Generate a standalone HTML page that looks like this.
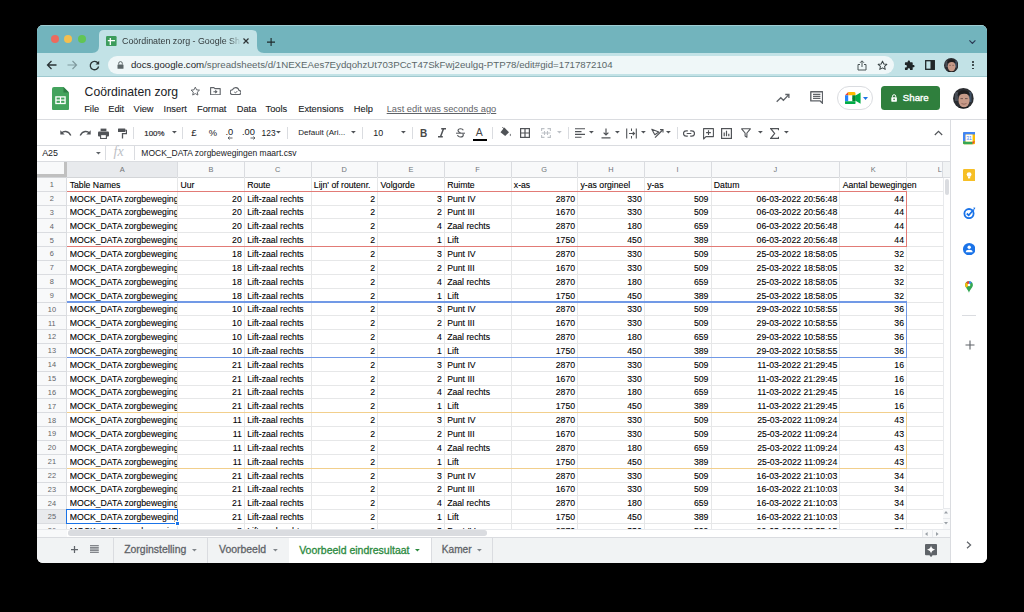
<!DOCTYPE html><html><head><meta charset="utf-8"><style>
*{margin:0;padding:0;box-sizing:border-box}
html,body{width:1024px;height:612px;overflow:hidden;background:#000;font-family:"Liberation Sans", sans-serif}
.a{position:absolute}
.t{position:absolute;white-space:nowrap;line-height:1}
.c{position:absolute;white-space:nowrap;line-height:1;font-size:8.7px;color:#000;-webkit-text-stroke:0.1px #000}
.r{text-align:right}
</style></head><body>
<div class="a" style="left:37px;top:25px;width:950px;height:538px;border-radius:6px;overflow:hidden;background:#fff">
<div class="a" style="left:-37px;top:-25px;width:1024px;height:612px">
<div class="a" style="left:37.00px;top:25.00px;width:950.00px;height:28.00px;background:#72b4bd"></div>
<div class="a" style="left:37.00px;top:25.00px;width:950.00px;height:0.80px;background:#9fcdd3"></div>
<div class="a" style="left:50.60px;top:34.80px;width:8.40px;height:8.40px;background:#ed6a5e;border-radius:50%"></div>
<div class="a" style="left:64.10px;top:34.80px;width:8.40px;height:8.40px;background:#f4bf4f;border-radius:50%"></div>
<div class="a" style="left:77.60px;top:34.80px;width:8.40px;height:8.40px;background:#61c554;border-radius:50%"></div>
<svg class="a" style="left:92px;top:29px" width="172" height="24" viewBox="0 0 172 24"><path d="M0 24 Q7 24 7 17 L7 6 Q7 1 12 1 L160 1 Q165 1 165 6 L165 17 Q165 24 172 24 Z" fill="#c2e2e6"/></svg>
<svg class="a" style="left:106.2px;top:36.3px" width="10.6" height="10.2" viewBox="0 0 10.6 10.2"><rect width="10.6" height="10.2" rx="1.2" fill="#3d9c5c"/><path d="M4.3 2V9M1.8 4.6H9" stroke="#fff" stroke-width="1.3"/></svg>
<div class="t" style="left:122px;top:36.9px;width:119px;overflow:hidden;font-size:8.9px;color:#333b3d;-webkit-mask-image:linear-gradient(90deg,#000 90%,transparent 100%)">Coördinaten zorg - Google Sheets</div>
<svg class="a" style="left:243.2px;top:38.4px" width="6" height="6" viewBox="0 0 6 6"><path d="M0.5 0.5L5.5 5.5M5.5 0.5L0.5 5.5" stroke="#2d3436" stroke-width="1.2"/></svg>
<svg class="a" style="left:266.9px;top:37.6px" width="8.2" height="8.2" viewBox="0 0 8.2 8.2"><path d="M4.1 0V8.2M0 4.1H8.2" stroke="#1f2a2c" stroke-width="1.15"/></svg>
<svg class="a" style="left:969.1px;top:39.9px" width="6.8" height="4.2" viewBox="0 0 6.8 4.2"><path d="M0.4 0.4L3.4 3.5L6.4 0.4" stroke="#2b3a55" stroke-width="1.1" fill="none"/></svg>
<div class="a" style="left:37.00px;top:52.80px;width:950.00px;height:23.60px;background:#c2e2e6"></div>
<div class="a" style="left:37.00px;top:76.00px;width:950.00px;height:0.60px;background:#9fc9cf"></div>
<svg class="a" style="left:46px;top:59.5px" width="11" height="10" viewBox="0 0 11 10"><path d="M10.5 5H1.5M5.5 1L1.5 5L5.5 9" stroke="#2a3436" stroke-width="1.3" fill="none"/></svg>
<svg class="a" style="left:67px;top:59.5px" width="11" height="10" viewBox="0 0 11 10"><path d="M0.5 5H9.5M5.5 1L9.5 5L5.5 9" stroke="#7f9a9e" stroke-width="1.2" fill="none"/></svg>
<svg class="a" style="left:88.5px;top:59.5px" width="11" height="11" viewBox="0 0 11 11"><path d="M9 3.2A4.2 4.2 0 1 0 9.6 6.5" stroke="#2a3436" stroke-width="1.3" fill="none"/><path d="M10.2 0.8V4.4H6.6Z" fill="#2a3436"/></svg>
<div class="a" style="left:107.90px;top:55.90px;width:786.10px;height:17.90px;background:#eff7f8;border-radius:9px"></div>
<svg class="a" style="left:116.5px;top:61px" width="7" height="8" viewBox="0 0 7 8"><path d="M1.7 3.5V2.4A1.8 1.8 0 0 1 5.3 2.4V3.5" stroke="#5c6668" stroke-width="1" fill="none"/><rect x="0.5" y="3.4" width="6" height="4.4" rx="0.6" fill="#5c6668"/></svg>
<div class="t" style="left:130.90px;top:60.00px;font-size:9.7px"><span style="color:#1f2628">docs.google.com</span><span style="color:#5b6769">/spreadsheets/d/1NEXEAes7EydqohzUt703PCcT47SkFwj2eulgq-PTP78/edit#gid=1717872104</span></div>
<svg class="a" style="left:857px;top:59.5px" width="10" height="11" viewBox="0 0 10 11"><path d="M3 4.5H1V10H9V4.5H7M5 7V1M3 2.8L5 0.8L7 2.8" stroke="#4a5456" stroke-width="1" fill="none"/></svg>
<svg class="a" style="left:877px;top:59.5px" width="11" height="11" viewBox="0 0 24 24"><path d="M12 2.5l2.9 6.2 6.6.7-5 4.5 1.4 6.6L12 17.2l-5.9 3.3 1.4-6.6-5-4.5 6.6-.7z" stroke="#3a4446" stroke-width="2.2" fill="none" stroke-linejoin="round"/></svg>
<svg class="a" style="left:903.5px;top:59.5px" width="11" height="11" viewBox="0 0 24 24"><path d="M20.5 11H19V7c0-1.1-.9-2-2-2h-4V3.5C13 2.1 11.9 1 10.5 1S8 2.1 8 3.5V5H4c-1.1 0-2 .9-2 2v3.8h1.5c1.5 0 2.7 1.2 2.7 2.7S5 16.2 3.5 16.2H2V20c0 1.1.9 2 2 2h3.8v-1.5c0-1.5 1.2-2.7 2.7-2.7s2.7 1.2 2.7 2.7V22H17c1.1 0 2-.9 2-2v-4h1.5c1.4 0 2.5-1.1 2.5-2.5S21.9 11 20.5 11z" fill="#1f2628"/></svg>
<svg class="a" style="left:925px;top:60px" width="10" height="10" viewBox="0 0 10 10"><rect x="0.7" y="0.7" width="8.6" height="8.6" fill="none" stroke="#1f2628" stroke-width="1.3"/><rect x="5.5" y="0.7" width="3.8" height="8.6" fill="#1f2628"/></svg>
<svg class="a" style="left:944.10px;top:57.90px" width="14.4" height="14.4" viewBox="0 0 20.8 20.8"><defs><clipPath id="av2"><circle cx="10.4" cy="10.4" r="10.4"/></clipPath></defs><g clip-path="url(#av2)"><rect width="20.8" height="20.8" fill="#2b2d31"/><rect x="2" y="4" width="3" height="9" fill="#5b636e" opacity=".6"/><rect x="15.5" y="4" width="3" height="10" fill="#4f6a8a" opacity=".6"/><ellipse cx="11" cy="12" rx="5.6" ry="7.4" fill="#c79a88"/><path d="M4.5 8Q5 2 11 2.2Q17 2.4 17 8.5L15.8 7Q12 4.5 6.5 6.8Z" fill="#1f1d1e"/><path d="M7.5 10.6H10M12 10.6H14.6" stroke="#5a4440" stroke-width=".8"/><path d="M3 20.8Q6 17.5 11 19.5Q16 17.5 19 20.8Z" fill="#1a1a1c"/></g></svg>
<div class="a" style="left:971.80px;top:60.90px;width:1.80px;height:1.80px;background:#1f2628;border-radius:50%"></div>
<div class="a" style="left:971.80px;top:64.20px;width:1.80px;height:1.80px;background:#1f2628;border-radius:50%"></div>
<div class="a" style="left:971.80px;top:67.50px;width:1.80px;height:1.80px;background:#1f2628;border-radius:50%"></div>
<svg class="a" style="left:52px;top:86.7px" width="17" height="23.4" viewBox="0 0 17 23.4"><path d="M2 0H11.5L17 5.5V21.4Q17 23.4 15 23.4H2Q0 23.4 0 21.4V2Q0 0 2 0Z" fill="#43a35d"/><path d="M11.5 0V5.5H17Z" fill="#2e7d45"/><rect x="3.9" y="9.9" width="9.2" height="6.6" fill="none" stroke="#fff" stroke-width="1.3"/><line x1="8.5" y1="9.9" x2="8.5" y2="16.5" stroke="#fff" stroke-width="1.2"/><line x1="3.9" y1="13.2" x2="13.1" y2="13.2" stroke="#fff" stroke-width="1.2"/></svg>
<div class="t" style="left:84.60px;top:85.80px;font-size:12.2px;color:#202124">Coördinaten zorg</div>
<svg class="a" style="left:190.3px;top:85.6px" width="10.6" height="10.6" viewBox="0 0 24 24"><path d="M12 2.5l2.9 6.2 6.6.7-5 4.5 1.4 6.6L12 17.2l-5.9 3.3 1.4-6.6-5-4.5 6.6-.7z" stroke="#5f6368" stroke-width="2.2" fill="none" stroke-linejoin="round"/></svg>
<svg class="a" style="left:209.8px;top:86.6px" width="10.8" height="8.4" viewBox="0 0 10.8 8.4"><path d="M0.6 0.6H3.9L4.9 1.6H10.2V7.8H0.6Z" stroke="#5f6368" stroke-width="1.1" fill="none" stroke-linejoin="round"/><path d="M3.4 4.7H6.6M5.3 3.3L6.8 4.7L5.3 6.1" stroke="#5f6368" stroke-width="1.1" fill="none"/></svg>
<svg class="a" style="left:229.8px;top:87px" width="11.4" height="8.2" viewBox="0 0 11.4 8.2"><path d="M2.7 7.6H8.8A2.1 2.1 0 0 0 9 3.4A3.4 3.4 0 0 0 2.5 2.8A2.4 2.4 0 0 0 2.7 7.6Z" stroke="#5f6368" stroke-width="1.1" fill="none"/><path d="M4.3 5L5.4 6L7.3 4.1" stroke="#5f6368" stroke-width="1" fill="none"/></svg>
<div class="t" style="left:84.20px;top:104.90px;font-size:9.3px;color:#202124;-webkit-text-stroke:0.1px #202124">File</div>
<div class="t" style="left:108.20px;top:104.90px;font-size:9.3px;color:#202124;-webkit-text-stroke:0.1px #202124">Edit</div>
<div class="t" style="left:133.60px;top:104.90px;font-size:9.3px;color:#202124;-webkit-text-stroke:0.1px #202124">View</div>
<div class="t" style="left:163.60px;top:104.90px;font-size:9.3px;color:#202124;-webkit-text-stroke:0.1px #202124">Insert</div>
<div class="t" style="left:197.00px;top:104.90px;font-size:9.3px;color:#202124;-webkit-text-stroke:0.1px #202124">Format</div>
<div class="t" style="left:236.70px;top:104.90px;font-size:9.3px;color:#202124;-webkit-text-stroke:0.1px #202124">Data</div>
<div class="t" style="left:265.50px;top:104.90px;font-size:9.3px;color:#202124;-webkit-text-stroke:0.1px #202124">Tools</div>
<div class="t" style="left:298.20px;top:104.90px;font-size:9.3px;color:#202124;-webkit-text-stroke:0.1px #202124">Extensions</div>
<div class="t" style="left:353.80px;top:104.90px;font-size:9.3px;color:#202124;-webkit-text-stroke:0.1px #202124">Help</div>
<div class="t" style="left:386.70px;top:104.90px;font-size:9.3px;color:#5f6368;text-decoration:underline">Last edit was seconds ago</div>
<svg class="a" style="left:775.5px;top:93px" width="14" height="10" viewBox="0 0 14 10"><path d="M0.7 8.8L4.8 4.7L7.4 7.3L12.4 2.1M9.3 1.5H12.9V5.1" stroke="#5f6368" stroke-width="1.3" fill="none"/></svg>
<svg class="a" style="left:809.60px;top:91.20px" width="13.4" height="13" viewBox="0 0 13.4 13"><path d="M0.8 0.8H12.6V12.3L10.2 9.9H0.8Z" stroke="#5f6368" stroke-width="1.4" fill="none" stroke-linejoin="round"/><path d="M3 3.4H10.4M3 5.4H10.4M3 7.4H10.4" stroke="#5f6368" stroke-width="1.1"/></svg>
<div class="a" style="left:837.40px;top:86.10px;width:35.60px;height:23.80px;border:1px solid #dadce0;border-radius:12px;background:#fff"></div>
<svg class="a" style="left:844.60px;top:92.00px" width="16.2" height="12.4" viewBox="0 0 16.2 12.4"><path d="M3.2 0H9Q10.5 0 10.5 1.5V3.2H3.2Z" fill="#ffba00"/><path d="M0 3.2L3.2 0V3.2Z" fill="#ea4335"/><path d="M0 3.2H3.2V9.2H0Z" fill="#2684fc"/><path d="M0 9.2H10.5V10.9Q10.5 12.4 9 12.4H1.5Q0 12.4 0 10.9Z" fill="#00ac47"/><path d="M7.3 3.2H10.5V9.2H7.3Z" fill="#00832d"/><path d="M10.5 3.6L15.6 0.6V11.8L10.5 8.8Z" fill="#00ac47"/><path d="M7.3 6.2L10.5 3.6V8.8Z" fill="#00832d"/></svg>
<svg class="a" style="left:862.5px;top:97px" width="5" height="3" viewBox="0 0 5 3"><path d="M0 0H5L2.5 3Z" fill="#1a73e8"/></svg>
<div class="a" style="left:880.90px;top:86.10px;width:58.80px;height:24.00px;background:#2f7f3d;border-radius:3.5px"></div>
<svg class="a" style="left:890.6px;top:94px" width="6.2" height="7.8" viewBox="0 0 6.2 7.8"><path d="M1.5 3.3V2.3A1.6 1.6 0 0 1 4.7 2.3V3.3" stroke="#fff" stroke-width="1" fill="none"/><rect x="0.3" y="3.2" width="5.6" height="4.5" rx="0.6" fill="#fff"/><circle cx="3.1" cy="5.4" r="0.8" fill="#2f7f3d"/></svg>
<div class="t" style="left:902.80px;top:92.50px;font-size:9.7px;color:#fff;-webkit-text-stroke:0.35px #fff">Share</div>
<svg class="a" style="left:952.90px;top:88.00px" width="20.8" height="20.8" viewBox="0 0 20.8 20.8"><defs><clipPath id="av1"><circle cx="10.4" cy="10.4" r="10.4"/></clipPath></defs><g clip-path="url(#av1)"><rect width="20.8" height="20.8" fill="#2b2d31"/><rect x="2" y="4" width="3" height="9" fill="#5b636e" opacity=".6"/><rect x="15.5" y="4" width="3" height="10" fill="#4f6a8a" opacity=".6"/><ellipse cx="11" cy="12" rx="5.6" ry="7.4" fill="#c79a88"/><path d="M4.5 8Q5 2 11 2.2Q17 2.4 17 8.5L15.8 7Q12 4.5 6.5 6.8Z" fill="#1f1d1e"/><path d="M7.5 10.6H10M12 10.6H14.6" stroke="#5a4440" stroke-width=".8"/><path d="M8.5 15.5Q11 17 13.5 15.5" stroke="#8a5d55" stroke-width=".8" fill="none"/><path d="M3 20.8Q6 17.5 11 19.5Q16 17.5 19 20.8Z" fill="#1a1a1c"/></g></svg>
<div class="a" style="left:37.00px;top:119.20px;width:950.00px;height:0.80px;background:#dadce0"></div>
<div class="a" style="left:37.00px;top:145.00px;width:913.50px;height:0.80px;background:#dadce0"></div>
<svg class="a" style="left:60.00px;top:128.50px" width="12" height="8" viewBox="0 0 12 8"><path d="M1.5 4.2C3.5 1.8 8.2 1.3 10.8 6.5" stroke="#505357" stroke-width="1.4" fill="none"/><path d="M0.3 1.2V5.6H4.7Z" fill="#505357"/></svg>
<svg class="a" style="left:79.00px;top:128.50px" width="12" height="8" viewBox="0 0 12 8"><path d="M10.5 4.2C8.5 1.8 3.8 1.3 1.2 6.5" stroke="#505357" stroke-width="1.4" fill="none"/><path d="M11.7 1.2V5.6H7.3Z" fill="#505357"/></svg>
<svg class="a" style="left:97.50px;top:127.50px" width="11" height="11" viewBox="0 0 11 11"><rect x="2.6" y="0.6" width="5.8" height="2.6" fill="#505357"/><rect x="0" y="3.4" width="11" height="5" rx="1" fill="#505357"/><rect x="2.6" y="6.6" width="5.8" height="3.9" fill="#fff" stroke="#505357" stroke-width="1.1"/></svg>
<svg class="a" style="left:117.50px;top:127.50px" width="9" height="11" viewBox="0 0 9 11"><rect x="0" y="0.5" width="7.4" height="3.6" rx="0.5" fill="#505357"/><path d="M7.4 2.3H8.5V5.6H4.5V10.5" stroke="#505357" stroke-width="1.3" fill="none"/></svg>
<div class="a" style="left:132.90px;top:126.70px;width:0.80px;height:12.10px;background:#dadce0"></div>
<div class="t" style="left:144.30px;top:129.50px;font-size:7.9px;color:#202124;-webkit-text-stroke:0.15px #202124">100%</div>
<svg class="a" style="left:171.60px;top:131.40px" width="5" height="3" viewBox="0 0 5 3"><path d="M0 0H4.8L2.4 2.6Z" fill="#505357"/></svg>
<div class="a" style="left:182.00px;top:126.70px;width:0.80px;height:12.10px;background:#dadce0"></div>
<div class="t" style="left:191.30px;top:128.10px;font-size:9.8px;color:#202124">£</div>
<div class="t" style="left:208.80px;top:128.10px;font-size:9.4px;color:#202124">%</div>
<div class="t" style="left:225.50px;top:128.40px;font-size:9.3px;color:#202124">.0</div>
<svg class="a" style="left:226.80px;top:136.00px" width="6" height="4" viewBox="0 0 6 4"><path d="M5.5 2H1.2M2.6 0.6L1 2L2.6 3.4" stroke="#505357" stroke-width="0.9" fill="none"/></svg>
<div class="t" style="left:242.00px;top:128.40px;font-size:9.3px;color:#202124">.00</div>
<svg class="a" style="left:249.50px;top:136.00px" width="6" height="4" viewBox="0 0 6 4"><path d="M0.5 2H4.8M3.4 0.6L5 2L3.4 3.4" stroke="#505357" stroke-width="0.9" fill="none"/></svg>
<div class="t" style="left:261.60px;top:129.10px;font-size:8.4px;color:#202124">123</div>
<svg class="a" style="left:276.00px;top:131.40px" width="5" height="3" viewBox="0 0 5 3"><path d="M0 0H4.8L2.4 2.6Z" fill="#505357"/></svg>
<div class="a" style="left:286.90px;top:126.70px;width:0.80px;height:12.10px;background:#dadce0"></div>
<div class="t" style="left:298.30px;top:129.20px;font-size:8.05px;color:#202124">Default (Ari...</div>
<svg class="a" style="left:351.00px;top:131.40px" width="5" height="3" viewBox="0 0 5 3"><path d="M0 0H4.8L2.4 2.6Z" fill="#505357"/></svg>
<div class="a" style="left:361.90px;top:126.70px;width:0.80px;height:12.10px;background:#dadce0"></div>
<div class="t" style="left:373.30px;top:129.00px;font-size:8.9px;color:#202124">10</div>
<svg class="a" style="left:401.40px;top:131.40px" width="5" height="3" viewBox="0 0 5 3"><path d="M0 0H4.8L2.4 2.6Z" fill="#505357"/></svg>
<div class="a" style="left:411.60px;top:126.70px;width:0.80px;height:12.10px;background:#dadce0"></div>
<div class="t" style="left:419.90px;top:128.80px;font-size:10px;color:#474747;font-weight:bold">B</div>
<svg class="a" style="left:437.30px;top:128.00px" width="10" height="9.5" viewBox="0 0 10 9.5"><path d="M4.2 0.8H9M1 8.7H5.8M6.5 0.8L3.5 8.7" stroke="#505357" stroke-width="1.5" fill="none"/></svg>
<svg class="a" style="left:455.80px;top:127.80px" width="9" height="10" viewBox="0 0 9 10"><path d="M7.3 2.2C6.9 1.2 6 0.8 4.6 0.8C3 0.8 2 1.6 2 2.8C2 4 3 4.4 4.5 4.8M1.6 7C1.8 8.4 3 9 4.5 9C6.3 9 7.3 8.3 7.3 7C7.3 6.3 7 5.9 6.6 5.6" stroke="#505357" stroke-width="1.1" fill="none"/><path d="M0 5.2H9" stroke="#505357" stroke-width="1"/></svg>
<div class="t" style="left:475.80px;top:126.80px;font-size:10.5px;color:#474747">A</div>
<div class="a" style="left:472.80px;top:138.70px;width:14.10px;height:1.90px;background:#000"></div>
<div class="a" style="left:492.10px;top:126.70px;width:0.80px;height:12.10px;background:#dadce0"></div>
<svg class="a" style="left:500.00px;top:127.30px" width="12" height="11" viewBox="0 0 12 11"><path d="M4.3 0.6L9 5.3L5.2 9.1L0.5 5.3Z" fill="#505357"/><path d="M10.3 6.5Q11.5 8.2 10.3 9.2Q9.1 8.2 10.3 6.5Z" fill="#505357"/><path d="M2.4 0.1L5.2 2.9" stroke="#505357" stroke-width="1"/></svg>
<svg class="a" style="left:520.30px;top:128.00px" width="10" height="10" viewBox="0 0 10 10"><rect x="0.6" y="0.6" width="8.8" height="8.8" fill="none" stroke="#505357" stroke-width="1.2"/><path d="M5 0.6V9.4M0.6 5H9.4" stroke="#505357" stroke-width="1.2"/></svg>
<svg class="a" style="left:540.50px;top:128.00px" width="10" height="10" viewBox="0 0 10 10"><path d="M0.6 3V0.6H3.5M6.5 0.6H9.4V3M9.4 7V9.4H6.5M3.5 9.4H0.6V7M0.6 5H9.4M3.5 3V7M6.5 3V7" stroke="#bdc1c6" stroke-width="1.1" fill="none"/></svg>
<svg class="a" style="left:556.90px;top:131.40px" width="5" height="3" viewBox="0 0 5 3"><path d="M0 0H4.8L2.4 2.6Z" fill="#bdc1c6"/></svg>
<div class="a" style="left:568.30px;top:126.70px;width:0.80px;height:12.10px;background:#dadce0"></div>
<svg class="a" style="left:575.00px;top:128.00px" width="10" height="10" viewBox="0 0 10 10"><path d="M0 0.8H10M0 3.6H6.5M0 6.4H10M0 9.2H6.5" stroke="#505357" stroke-width="1.1"/></svg>
<svg class="a" style="left:589.20px;top:131.40px" width="5" height="3" viewBox="0 0 5 3"><path d="M0 0H4.8L2.4 2.6Z" fill="#505357"/></svg>
<svg class="a" style="left:601.00px;top:127.50px" width="10" height="11" viewBox="0 0 10 11"><path d="M5 0.5V7M2.6 4.6L5 7L7.4 4.6M0.5 9.8H9.5" stroke="#505357" stroke-width="1.2" fill="none"/></svg>
<svg class="a" style="left:615.00px;top:131.40px" width="5" height="3" viewBox="0 0 5 3"><path d="M0 0H4.8L2.4 2.6Z" fill="#505357"/></svg>
<svg class="a" style="left:626.00px;top:127.50px" width="11" height="11" viewBox="0 0 11 11"><path d="M0.7 0.5V10.5M10.3 0.5V10.5M3 5.5H8.5M6.8 3.8L8.5 5.5L6.8 7.2" stroke="#505357" stroke-width="1.1" fill="none"/><path d="M5.5 0.5V3M5.5 8V10.5" stroke="#505357" stroke-width="1"/></svg>
<svg class="a" style="left:640.80px;top:131.40px" width="5" height="3" viewBox="0 0 5 3"><path d="M0 0H4.8L2.4 2.6Z" fill="#505357"/></svg>
<svg class="a" style="left:651.00px;top:127.50px" width="13" height="11" viewBox="0 0 13 11"><path d="M0.8 1.2L7.8 4L3.8 6.7Z" stroke="#505357" stroke-width="1.1" fill="none" stroke-linejoin="round"/><path d="M4 9.6L11.6 2" stroke="#505357" stroke-width="1.2"/><path d="M9 1.6H12V4.6" stroke="#505357" stroke-width="1.1" fill="none"/></svg>
<svg class="a" style="left:666.20px;top:131.40px" width="5" height="3" viewBox="0 0 5 3"><path d="M0 0H4.8L2.4 2.6Z" fill="#505357"/></svg>
<div class="a" style="left:677.10px;top:126.70px;width:0.80px;height:12.10px;background:#dadce0"></div>
<svg class="a" style="left:683.20px;top:129.80px" width="12" height="7" viewBox="0 0 12 7"><path d="M4.8 0.8H3.2A2.7 2.7 0 0 0 3.2 6.2H4.8M7.2 0.8H8.8A2.7 2.7 0 0 1 8.8 6.2H7.2M3.7 3.5H8.3" stroke="#505357" stroke-width="1.2" fill="none"/></svg>
<svg class="a" style="left:702.50px;top:127.50px" width="11" height="12" viewBox="0 0 11 12"><path d="M0.6 0.6H10.4V8.6H3L0.6 11Z" stroke="#505357" stroke-width="1.1" fill="none" stroke-linejoin="round"/><path d="M5.5 2.2V7M3.1 4.6H7.9" stroke="#505357" stroke-width="1.1"/></svg>
<svg class="a" style="left:721.20px;top:127.80px" width="11" height="11" viewBox="0 0 11 11"><rect x="0.6" y="0.6" width="9.8" height="9.8" fill="none" stroke="#505357" stroke-width="1.2"/><path d="M3.2 4.5V8.2M5.5 2.8V8.2M7.8 5.8V8.2" stroke="#505357" stroke-width="1.2"/></svg>
<svg class="a" style="left:741.00px;top:128.00px" width="10" height="10" viewBox="0 0 10 10"><path d="M0.6 0.8H9.4L5.9 5V9.2L4.1 8.1V5Z" stroke="#505357" stroke-width="1.1" fill="none" stroke-linejoin="round"/></svg>
<svg class="a" style="left:757.60px;top:131.40px" width="5" height="3" viewBox="0 0 5 3"><path d="M0 0H4.8L2.4 2.6Z" fill="#505357"/></svg>
<svg class="a" style="left:770.20px;top:127.50px" width="9" height="11" viewBox="0 0 9 11"><path d="M8.5 2.2V0.7H0.8L4.6 5.5L0.8 10.3H8.5V8.8" stroke="#505357" stroke-width="1.2" fill="none"/></svg>
<svg class="a" style="left:784.10px;top:131.40px" width="5" height="3" viewBox="0 0 5 3"><path d="M0 0H4.8L2.4 2.6Z" fill="#505357"/></svg>
<svg class="a" style="left:933.80px;top:129.60px" width="9" height="6" viewBox="0 0 9 6"><path d="M0.8 5L4.5 1.3L8.2 5" stroke="#505357" stroke-width="1.15" fill="none"/></svg>
<div class="a" style="left:37.00px;top:160.60px;width:913.50px;height:0.80px;background:#dadce0"></div>
<div class="t" style="left:42.20px;top:148.80px;font-size:8.9px;color:#202124">A25</div>
<svg class="a" style="left:95.60px;top:152.40px" width="5" height="3" viewBox="0 0 5 3"><path d="M0 0H4.8L2.4 2.6Z" fill="#5f6368"/></svg>
<div class="a" style="left:105.20px;top:146.30px;width:0.80px;height:13.70px;background:#dadce0"></div>
<div class="t" style="left:113.50px;top:145.40px;font-size:14px;color:#bdc1c6;font-style:italic;font-family:&quot;Liberation Serif&quot;,serif">fx</div>
<div class="a" style="left:133.90px;top:146.30px;width:0.80px;height:13.70px;background:#dadce0"></div>
<div class="t" style="left:141.30px;top:149.10px;font-size:8.5px;color:#202124">MOCK_DATA zorgbewegingen maart.csv</div>
<div class="a" style="left:950.10px;top:120.00px;width:36.90px;height:443.00px;background:#fff"></div>
<div class="a" style="left:950.10px;top:119.20px;width:0.80px;height:443.80px;background:#dadce0"></div>
<svg class="a" style="left:962.80px;top:132.40px" width="12.2" height="12.2" viewBox="0 0 12.2 12.2"><rect x="0" y="0" width="12.2" height="12.2" rx="1.2" fill="#fbbc04"/><path d="M0 1.2Q0 0 1.2 0H12.2V2.6H2.6V9.6H0Z" fill="#4285f4"/><path d="M0 9.6H9.6V12.2H1.2Q0 12.2 0 11Z" fill="#34a853"/><path d="M9.6 9.6H12.2L9.6 12.2Z" fill="#ea4335"/><rect x="2.6" y="2.6" width="7" height="7" fill="#fff"/><text x="6.1" y="8.3" font-size="5.2" text-anchor="middle" fill="#4285f4" font-family="Liberation Sans">31</text></svg>
<svg class="a" style="left:962.80px;top:169.00px" width="12.2" height="12.4" viewBox="0 0 12.2 12.4"><rect x="0" y="0" width="12.2" height="12.4" rx="1.3" fill="#f6bf26"/><circle cx="6.1" cy="5.6" r="2.4" fill="#fff"/><rect x="5" y="8" width="2.2" height="1.4" fill="#fff"/></svg>
<svg class="a" style="left:963.20px;top:206.50px" width="12.5" height="12.5" viewBox="0 0 12.5 12.5"><circle cx="6" cy="6.6" r="4.6" fill="none" stroke="#1a73e8" stroke-width="1.8"/><path d="M3.8 6.5L5.7 8.3L10.8 2.5" stroke="#1a73e8" stroke-width="1.8" fill="none"/><path d="M10 0.8L12.2 0.5L11.9 2.8Z" fill="#1a73e8"/></svg>
<svg class="a" style="left:963.00px;top:243.00px" width="12.4" height="12.4" viewBox="0 0 12.4 12.4"><circle cx="6.2" cy="6.2" r="6.2" fill="#1a73e8"/><circle cx="6.2" cy="4.3" r="1.7" fill="#fff"/><path d="M2.8 8.9Q2.8 6.8 6.2 6.8Q9.6 6.8 9.6 8.9V9.3H2.8Z" fill="#fff"/></svg>
<svg class="a" style="left:965.00px;top:280.50px" width="8" height="12" viewBox="0 0 8 12"><path d="M4 0.2A3.9 3.9 0 0 1 7.9 4.1C7.9 6.6 5 8.6 4 11.8C3 8.6 0.1 6.6 0.1 4.1A3.9 3.9 0 0 1 4 0.2Z" fill="#34a853"/><path d="M0.1 4.1A3.9 3.9 0 0 1 1.2 1.3L4 4.1L1.5 6.8C0.7 6 0.1 5.1 0.1 4.1Z" fill="#fbbc04"/><path d="M1.2 1.3A3.9 3.9 0 0 1 4 0.2L4 4.1Z" fill="#ea4335"/><path d="M4 0.2A3.9 3.9 0 0 1 6.8 1.3L4 4.1Z" fill="#4285f4"/><circle cx="4" cy="4" r="1.3" fill="#fff"/></svg>
<div class="a" style="left:962.00px;top:315.40px;width:14.00px;height:0.80px;background:#dadce0"></div>
<svg class="a" style="left:964.50px;top:340.30px" width="10" height="10" viewBox="0 0 10 10"><path d="M5 0.5V9.5M0.5 5H9.5" stroke="#5f6368" stroke-width="1.1"/></svg>
<svg class="a" style="left:965.50px;top:540.50px" width="6" height="8" viewBox="0 0 6 8"><path d="M1 0.8L4.6 4L1 7.2" stroke="#5f6368" stroke-width="1.2" fill="none"/></svg>
<div class="a" style="left:37.00px;top:161.40px;width:913.10px;height:375.60px;background:#fff"></div>
<div class="a" style="left:37px;top:161.4px;width:905.5px;height:368.00px;overflow:hidden">
<div class="a" style="left:-37px;top:-161.4px;width:1024px;height:612px">
<div class="a" style="left:37.00px;top:161.40px;width:913.00px;height:16.05px;background:#f8f9fa"></div>
<div class="a" style="left:66.80px;top:161.40px;width:110.80px;height:16.05px;background:#e8eaed"></div>
<div class="a" style="left:37.00px;top:177.45px;width:29.80px;height:351.95px;background:#f8f9fa"></div>
<div class="a" style="left:37.00px;top:509.75px;width:29.80px;height:13.85px;background:#e8eaed"></div>
<div class="a" style="left:37.00px;top:176.95px;width:29.80px;height:0.80px;background:#dadce0"></div>
<div class="a" style="left:66.80px;top:176.95px;width:913.00px;height:0.80px;background:#e6e7e8"></div>
<div class="a" style="left:37.00px;top:190.80px;width:29.80px;height:0.80px;background:#dadce0"></div>
<div class="a" style="left:66.80px;top:190.80px;width:913.00px;height:0.80px;background:#e6e7e8"></div>
<div class="a" style="left:37.00px;top:204.64px;width:29.80px;height:0.80px;background:#dadce0"></div>
<div class="a" style="left:66.80px;top:204.64px;width:913.00px;height:0.80px;background:#e6e7e8"></div>
<div class="a" style="left:37.00px;top:218.49px;width:29.80px;height:0.80px;background:#dadce0"></div>
<div class="a" style="left:66.80px;top:218.49px;width:913.00px;height:0.80px;background:#e6e7e8"></div>
<div class="a" style="left:37.00px;top:232.33px;width:29.80px;height:0.80px;background:#dadce0"></div>
<div class="a" style="left:66.80px;top:232.33px;width:913.00px;height:0.80px;background:#e6e7e8"></div>
<div class="a" style="left:37.00px;top:246.18px;width:29.80px;height:0.80px;background:#dadce0"></div>
<div class="a" style="left:66.80px;top:246.18px;width:913.00px;height:0.80px;background:#e6e7e8"></div>
<div class="a" style="left:37.00px;top:260.03px;width:29.80px;height:0.80px;background:#dadce0"></div>
<div class="a" style="left:66.80px;top:260.03px;width:913.00px;height:0.80px;background:#e6e7e8"></div>
<div class="a" style="left:37.00px;top:273.87px;width:29.80px;height:0.80px;background:#dadce0"></div>
<div class="a" style="left:66.80px;top:273.87px;width:913.00px;height:0.80px;background:#e6e7e8"></div>
<div class="a" style="left:37.00px;top:287.72px;width:29.80px;height:0.80px;background:#dadce0"></div>
<div class="a" style="left:66.80px;top:287.72px;width:913.00px;height:0.80px;background:#e6e7e8"></div>
<div class="a" style="left:37.00px;top:301.56px;width:29.80px;height:0.80px;background:#dadce0"></div>
<div class="a" style="left:66.80px;top:301.56px;width:913.00px;height:0.80px;background:#e6e7e8"></div>
<div class="a" style="left:37.00px;top:315.41px;width:29.80px;height:0.80px;background:#dadce0"></div>
<div class="a" style="left:66.80px;top:315.41px;width:913.00px;height:0.80px;background:#e6e7e8"></div>
<div class="a" style="left:37.00px;top:329.26px;width:29.80px;height:0.80px;background:#dadce0"></div>
<div class="a" style="left:66.80px;top:329.26px;width:913.00px;height:0.80px;background:#e6e7e8"></div>
<div class="a" style="left:37.00px;top:343.10px;width:29.80px;height:0.80px;background:#dadce0"></div>
<div class="a" style="left:66.80px;top:343.10px;width:913.00px;height:0.80px;background:#e6e7e8"></div>
<div class="a" style="left:37.00px;top:356.95px;width:29.80px;height:0.80px;background:#dadce0"></div>
<div class="a" style="left:66.80px;top:356.95px;width:913.00px;height:0.80px;background:#e6e7e8"></div>
<div class="a" style="left:37.00px;top:370.79px;width:29.80px;height:0.80px;background:#dadce0"></div>
<div class="a" style="left:66.80px;top:370.79px;width:913.00px;height:0.80px;background:#e6e7e8"></div>
<div class="a" style="left:37.00px;top:384.64px;width:29.80px;height:0.80px;background:#dadce0"></div>
<div class="a" style="left:66.80px;top:384.64px;width:913.00px;height:0.80px;background:#e6e7e8"></div>
<div class="a" style="left:37.00px;top:398.49px;width:29.80px;height:0.80px;background:#dadce0"></div>
<div class="a" style="left:66.80px;top:398.49px;width:913.00px;height:0.80px;background:#e6e7e8"></div>
<div class="a" style="left:37.00px;top:412.33px;width:29.80px;height:0.80px;background:#dadce0"></div>
<div class="a" style="left:66.80px;top:412.33px;width:913.00px;height:0.80px;background:#e6e7e8"></div>
<div class="a" style="left:37.00px;top:426.18px;width:29.80px;height:0.80px;background:#dadce0"></div>
<div class="a" style="left:66.80px;top:426.18px;width:913.00px;height:0.80px;background:#e6e7e8"></div>
<div class="a" style="left:37.00px;top:440.02px;width:29.80px;height:0.80px;background:#dadce0"></div>
<div class="a" style="left:66.80px;top:440.02px;width:913.00px;height:0.80px;background:#e6e7e8"></div>
<div class="a" style="left:37.00px;top:453.87px;width:29.80px;height:0.80px;background:#dadce0"></div>
<div class="a" style="left:66.80px;top:453.87px;width:913.00px;height:0.80px;background:#e6e7e8"></div>
<div class="a" style="left:37.00px;top:467.72px;width:29.80px;height:0.80px;background:#dadce0"></div>
<div class="a" style="left:66.80px;top:467.72px;width:913.00px;height:0.80px;background:#e6e7e8"></div>
<div class="a" style="left:37.00px;top:481.56px;width:29.80px;height:0.80px;background:#dadce0"></div>
<div class="a" style="left:66.80px;top:481.56px;width:913.00px;height:0.80px;background:#e6e7e8"></div>
<div class="a" style="left:37.00px;top:495.41px;width:29.80px;height:0.80px;background:#dadce0"></div>
<div class="a" style="left:66.80px;top:495.41px;width:913.00px;height:0.80px;background:#e6e7e8"></div>
<div class="a" style="left:37.00px;top:509.25px;width:29.80px;height:0.80px;background:#dadce0"></div>
<div class="a" style="left:66.80px;top:509.25px;width:913.00px;height:0.80px;background:#e6e7e8"></div>
<div class="a" style="left:37.00px;top:523.10px;width:29.80px;height:0.80px;background:#dadce0"></div>
<div class="a" style="left:66.80px;top:523.10px;width:913.00px;height:0.80px;background:#e6e7e8"></div>
<div class="a" style="left:37.00px;top:536.95px;width:29.80px;height:0.80px;background:#dadce0"></div>
<div class="a" style="left:66.80px;top:536.95px;width:913.00px;height:0.80px;background:#e6e7e8"></div>
<div class="a" style="left:37.00px;top:176.65px;width:913.00px;height:0.80px;background:#d3d5d8"></div>
<div class="a" style="left:66.40px;top:161.40px;width:0.80px;height:16.05px;background:#dadce0"></div>
<div class="a" style="left:66.40px;top:177.45px;width:0.80px;height:351.95px;background:#e6e7e8"></div>
<div class="a" style="left:177.20px;top:161.40px;width:0.80px;height:16.05px;background:#dadce0"></div>
<div class="a" style="left:177.20px;top:177.45px;width:0.80px;height:351.95px;background:#e6e7e8"></div>
<div class="a" style="left:243.86px;top:161.40px;width:0.80px;height:16.05px;background:#dadce0"></div>
<div class="a" style="left:243.86px;top:177.45px;width:0.80px;height:351.95px;background:#e6e7e8"></div>
<div class="a" style="left:310.52px;top:161.40px;width:0.80px;height:16.05px;background:#dadce0"></div>
<div class="a" style="left:310.52px;top:177.45px;width:0.80px;height:351.95px;background:#e6e7e8"></div>
<div class="a" style="left:377.19px;top:161.40px;width:0.80px;height:16.05px;background:#dadce0"></div>
<div class="a" style="left:377.19px;top:177.45px;width:0.80px;height:351.95px;background:#e6e7e8"></div>
<div class="a" style="left:443.85px;top:161.40px;width:0.80px;height:16.05px;background:#dadce0"></div>
<div class="a" style="left:443.85px;top:177.45px;width:0.80px;height:351.95px;background:#e6e7e8"></div>
<div class="a" style="left:510.51px;top:161.40px;width:0.80px;height:16.05px;background:#dadce0"></div>
<div class="a" style="left:510.51px;top:177.45px;width:0.80px;height:351.95px;background:#e6e7e8"></div>
<div class="a" style="left:577.18px;top:161.40px;width:0.80px;height:16.05px;background:#dadce0"></div>
<div class="a" style="left:577.18px;top:177.45px;width:0.80px;height:351.95px;background:#e6e7e8"></div>
<div class="a" style="left:643.84px;top:161.40px;width:0.80px;height:16.05px;background:#dadce0"></div>
<div class="a" style="left:643.84px;top:177.45px;width:0.80px;height:351.95px;background:#e6e7e8"></div>
<div class="a" style="left:710.50px;top:161.40px;width:0.80px;height:16.05px;background:#dadce0"></div>
<div class="a" style="left:710.50px;top:177.45px;width:0.80px;height:351.95px;background:#e6e7e8"></div>
<div class="a" style="left:839.40px;top:161.40px;width:0.80px;height:16.05px;background:#dadce0"></div>
<div class="a" style="left:839.40px;top:177.45px;width:0.80px;height:351.95px;background:#e6e7e8"></div>
<div class="a" style="left:906.10px;top:161.40px;width:0.80px;height:16.05px;background:#dadce0"></div>
<div class="a" style="left:906.10px;top:177.45px;width:0.80px;height:351.95px;background:#e6e7e8"></div>
<div class="a" style="left:972.80px;top:161.40px;width:0.80px;height:16.05px;background:#dadce0"></div>
<div class="a" style="left:972.80px;top:177.45px;width:0.80px;height:351.95px;background:#e6e7e8"></div>
<div class="a" style="left:66.40px;top:177.45px;width:0.80px;height:351.95px;background:#dadce0"></div>
<div class="a" style="left:64.10px;top:161.40px;width:2.70px;height:16.05px;background:#c0c0c0"></div>
<div class="a" style="left:37.00px;top:174.20px;width:29.80px;height:2.80px;background:#c0c0c0"></div>
<div class="t" style="left:102.20px;width:40px;text-align:center;top:166.1px;font-size:7.4px;color:#707478">A</div>
<div class="t" style="left:190.93px;width:40px;text-align:center;top:166.1px;font-size:7.4px;color:#707478">B</div>
<div class="t" style="left:257.59px;width:40px;text-align:center;top:166.1px;font-size:7.4px;color:#707478">C</div>
<div class="t" style="left:324.26px;width:40px;text-align:center;top:166.1px;font-size:7.4px;color:#707478">D</div>
<div class="t" style="left:390.92px;width:40px;text-align:center;top:166.1px;font-size:7.4px;color:#707478">E</div>
<div class="t" style="left:457.58px;width:40px;text-align:center;top:166.1px;font-size:7.4px;color:#707478">F</div>
<div class="t" style="left:524.24px;width:40px;text-align:center;top:166.1px;font-size:7.4px;color:#707478">G</div>
<div class="t" style="left:590.91px;width:40px;text-align:center;top:166.1px;font-size:7.4px;color:#707478">H</div>
<div class="t" style="left:657.57px;width:40px;text-align:center;top:166.1px;font-size:7.4px;color:#707478">I</div>
<div class="t" style="left:755.35px;width:40px;text-align:center;top:166.1px;font-size:7.4px;color:#707478">J</div>
<div class="t" style="left:853.15px;width:40px;text-align:center;top:166.1px;font-size:7.4px;color:#707478">K</div>
<div class="t" style="left:919.85px;width:40px;text-align:center;top:166.1px;font-size:7.4px;color:#707478">L</div>
<div class="t" style="left:37px;width:29.8px;text-align:center;top:181.15px;font-size:7.4px;color:#5f6368">1</div>
<div class="t" style="left:37px;width:29.8px;text-align:center;top:195.00px;font-size:7.4px;color:#5f6368">2</div>
<div class="t" style="left:37px;width:29.8px;text-align:center;top:208.84px;font-size:7.4px;color:#5f6368">3</div>
<div class="t" style="left:37px;width:29.8px;text-align:center;top:222.69px;font-size:7.4px;color:#5f6368">4</div>
<div class="t" style="left:37px;width:29.8px;text-align:center;top:236.53px;font-size:7.4px;color:#5f6368">5</div>
<div class="t" style="left:37px;width:29.8px;text-align:center;top:250.38px;font-size:7.4px;color:#5f6368">6</div>
<div class="t" style="left:37px;width:29.8px;text-align:center;top:264.23px;font-size:7.4px;color:#5f6368">7</div>
<div class="t" style="left:37px;width:29.8px;text-align:center;top:278.07px;font-size:7.4px;color:#5f6368">8</div>
<div class="t" style="left:37px;width:29.8px;text-align:center;top:291.92px;font-size:7.4px;color:#5f6368">9</div>
<div class="t" style="left:37px;width:29.8px;text-align:center;top:305.76px;font-size:7.4px;color:#5f6368">10</div>
<div class="t" style="left:37px;width:29.8px;text-align:center;top:319.61px;font-size:7.4px;color:#5f6368">11</div>
<div class="t" style="left:37px;width:29.8px;text-align:center;top:333.46px;font-size:7.4px;color:#5f6368">12</div>
<div class="t" style="left:37px;width:29.8px;text-align:center;top:347.30px;font-size:7.4px;color:#5f6368">13</div>
<div class="t" style="left:37px;width:29.8px;text-align:center;top:361.15px;font-size:7.4px;color:#5f6368">14</div>
<div class="t" style="left:37px;width:29.8px;text-align:center;top:374.99px;font-size:7.4px;color:#5f6368">15</div>
<div class="t" style="left:37px;width:29.8px;text-align:center;top:388.84px;font-size:7.4px;color:#5f6368">16</div>
<div class="t" style="left:37px;width:29.8px;text-align:center;top:402.69px;font-size:7.4px;color:#5f6368">17</div>
<div class="t" style="left:37px;width:29.8px;text-align:center;top:416.53px;font-size:7.4px;color:#5f6368">18</div>
<div class="t" style="left:37px;width:29.8px;text-align:center;top:430.38px;font-size:7.4px;color:#5f6368">19</div>
<div class="t" style="left:37px;width:29.8px;text-align:center;top:444.22px;font-size:7.4px;color:#5f6368">20</div>
<div class="t" style="left:37px;width:29.8px;text-align:center;top:458.07px;font-size:7.4px;color:#5f6368">21</div>
<div class="t" style="left:37px;width:29.8px;text-align:center;top:471.92px;font-size:7.4px;color:#5f6368">22</div>
<div class="t" style="left:37px;width:29.8px;text-align:center;top:485.76px;font-size:7.4px;color:#5f6368">23</div>
<div class="t" style="left:37px;width:29.8px;text-align:center;top:499.61px;font-size:7.4px;color:#5f6368">24</div>
<div class="t" style="left:37px;width:29.8px;text-align:center;top:513.45px;font-size:7.4px;color:#5f6368">25</div>
<div class="t" style="left:37px;width:29.8px;text-align:center;top:527.30px;font-size:7.4px;color:#5f6368">26</div>
<div class="t" style="left:37px;width:29.8px;text-align:center;top:541.15px;font-size:7.4px;color:#5f6368">27</div>
<div class="c" style="left:69.70px;top:180.75px">Table Names</div>
<div class="c" style="left:180.50px;top:180.75px">Uur</div>
<div class="c" style="left:247.16px;top:180.75px">Route</div>
<div class="c" style="left:313.82px;top:180.75px">Lijn&#x27; of routenr.</div>
<div class="c" style="left:380.49px;top:180.75px">Volgorde</div>
<div class="c" style="left:447.15px;top:180.75px">Ruimte</div>
<div class="c" style="left:513.81px;top:180.75px">x-as</div>
<div class="c" style="left:580.48px;top:180.75px">y-as orgineel</div>
<div class="c" style="left:647.14px;top:180.75px">y-as</div>
<div class="c" style="left:713.80px;top:180.75px">Datum</div>
<div class="c" style="left:842.70px;top:180.75px">Aantal bewegingen</div>
<div class="c" style="left:69.70px;width:107.50px;height:11px;overflow:hidden;top:194.60px">MOCK_DATA zorgbewegingen maart.csv</div>
<div class="c r" style="left:177.60px;width:64.16px;top:194.60px">20</div>
<div class="c" style="left:247.16px;top:194.60px">Lift-zaal rechts</div>
<div class="c r" style="left:310.92px;width:64.16px;top:194.60px">2</div>
<div class="c r" style="left:377.59px;width:64.16px;top:194.60px">3</div>
<div class="c" style="left:447.15px;top:194.60px">Punt IV</div>
<div class="c r" style="left:510.91px;width:64.16px;top:194.60px">2870</div>
<div class="c r" style="left:577.58px;width:64.16px;top:194.60px">330</div>
<div class="c r" style="left:644.24px;width:64.16px;top:194.60px">509</div>
<div class="c r" style="left:710.90px;width:126.40px;top:194.60px">06-03-2022 20:56:48</div>
<div class="c r" style="left:839.80px;width:64.20px;top:194.60px">44</div>
<div class="c" style="left:69.70px;width:107.50px;height:11px;overflow:hidden;top:208.44px">MOCK_DATA zorgbewegingen maart.csv</div>
<div class="c r" style="left:177.60px;width:64.16px;top:208.44px">20</div>
<div class="c" style="left:247.16px;top:208.44px">Lift-zaal rechts</div>
<div class="c r" style="left:310.92px;width:64.16px;top:208.44px">2</div>
<div class="c r" style="left:377.59px;width:64.16px;top:208.44px">2</div>
<div class="c" style="left:447.15px;top:208.44px">Punt III</div>
<div class="c r" style="left:510.91px;width:64.16px;top:208.44px">1670</div>
<div class="c r" style="left:577.58px;width:64.16px;top:208.44px">330</div>
<div class="c r" style="left:644.24px;width:64.16px;top:208.44px">509</div>
<div class="c r" style="left:710.90px;width:126.40px;top:208.44px">06-03-2022 20:56:48</div>
<div class="c r" style="left:839.80px;width:64.20px;top:208.44px">44</div>
<div class="c" style="left:69.70px;width:107.50px;height:11px;overflow:hidden;top:222.29px">MOCK_DATA zorgbewegingen maart.csv</div>
<div class="c r" style="left:177.60px;width:64.16px;top:222.29px">20</div>
<div class="c" style="left:247.16px;top:222.29px">Lift-zaal rechts</div>
<div class="c r" style="left:310.92px;width:64.16px;top:222.29px">2</div>
<div class="c r" style="left:377.59px;width:64.16px;top:222.29px">4</div>
<div class="c" style="left:447.15px;top:222.29px">Zaal rechts</div>
<div class="c r" style="left:510.91px;width:64.16px;top:222.29px">2870</div>
<div class="c r" style="left:577.58px;width:64.16px;top:222.29px">180</div>
<div class="c r" style="left:644.24px;width:64.16px;top:222.29px">659</div>
<div class="c r" style="left:710.90px;width:126.40px;top:222.29px">06-03-2022 20:56:48</div>
<div class="c r" style="left:839.80px;width:64.20px;top:222.29px">44</div>
<div class="c" style="left:69.70px;width:107.50px;height:11px;overflow:hidden;top:236.13px">MOCK_DATA zorgbewegingen maart.csv</div>
<div class="c r" style="left:177.60px;width:64.16px;top:236.13px">20</div>
<div class="c" style="left:247.16px;top:236.13px">Lift-zaal rechts</div>
<div class="c r" style="left:310.92px;width:64.16px;top:236.13px">2</div>
<div class="c r" style="left:377.59px;width:64.16px;top:236.13px">1</div>
<div class="c" style="left:447.15px;top:236.13px">Lift</div>
<div class="c r" style="left:510.91px;width:64.16px;top:236.13px">1750</div>
<div class="c r" style="left:577.58px;width:64.16px;top:236.13px">450</div>
<div class="c r" style="left:644.24px;width:64.16px;top:236.13px">389</div>
<div class="c r" style="left:710.90px;width:126.40px;top:236.13px">06-03-2022 20:56:48</div>
<div class="c r" style="left:839.80px;width:64.20px;top:236.13px">44</div>
<div class="c" style="left:69.70px;width:107.50px;height:11px;overflow:hidden;top:249.98px">MOCK_DATA zorgbewegingen maart.csv</div>
<div class="c r" style="left:177.60px;width:64.16px;top:249.98px">18</div>
<div class="c" style="left:247.16px;top:249.98px">Lift-zaal rechts</div>
<div class="c r" style="left:310.92px;width:64.16px;top:249.98px">2</div>
<div class="c r" style="left:377.59px;width:64.16px;top:249.98px">3</div>
<div class="c" style="left:447.15px;top:249.98px">Punt IV</div>
<div class="c r" style="left:510.91px;width:64.16px;top:249.98px">2870</div>
<div class="c r" style="left:577.58px;width:64.16px;top:249.98px">330</div>
<div class="c r" style="left:644.24px;width:64.16px;top:249.98px">509</div>
<div class="c r" style="left:710.90px;width:126.40px;top:249.98px">25-03-2022 18:58:05</div>
<div class="c r" style="left:839.80px;width:64.20px;top:249.98px">32</div>
<div class="c" style="left:69.70px;width:107.50px;height:11px;overflow:hidden;top:263.83px">MOCK_DATA zorgbewegingen maart.csv</div>
<div class="c r" style="left:177.60px;width:64.16px;top:263.83px">18</div>
<div class="c" style="left:247.16px;top:263.83px">Lift-zaal rechts</div>
<div class="c r" style="left:310.92px;width:64.16px;top:263.83px">2</div>
<div class="c r" style="left:377.59px;width:64.16px;top:263.83px">2</div>
<div class="c" style="left:447.15px;top:263.83px">Punt III</div>
<div class="c r" style="left:510.91px;width:64.16px;top:263.83px">1670</div>
<div class="c r" style="left:577.58px;width:64.16px;top:263.83px">330</div>
<div class="c r" style="left:644.24px;width:64.16px;top:263.83px">509</div>
<div class="c r" style="left:710.90px;width:126.40px;top:263.83px">25-03-2022 18:58:05</div>
<div class="c r" style="left:839.80px;width:64.20px;top:263.83px">32</div>
<div class="c" style="left:69.70px;width:107.50px;height:11px;overflow:hidden;top:277.67px">MOCK_DATA zorgbewegingen maart.csv</div>
<div class="c r" style="left:177.60px;width:64.16px;top:277.67px">18</div>
<div class="c" style="left:247.16px;top:277.67px">Lift-zaal rechts</div>
<div class="c r" style="left:310.92px;width:64.16px;top:277.67px">2</div>
<div class="c r" style="left:377.59px;width:64.16px;top:277.67px">4</div>
<div class="c" style="left:447.15px;top:277.67px">Zaal rechts</div>
<div class="c r" style="left:510.91px;width:64.16px;top:277.67px">2870</div>
<div class="c r" style="left:577.58px;width:64.16px;top:277.67px">180</div>
<div class="c r" style="left:644.24px;width:64.16px;top:277.67px">659</div>
<div class="c r" style="left:710.90px;width:126.40px;top:277.67px">25-03-2022 18:58:05</div>
<div class="c r" style="left:839.80px;width:64.20px;top:277.67px">32</div>
<div class="c" style="left:69.70px;width:107.50px;height:11px;overflow:hidden;top:291.52px">MOCK_DATA zorgbewegingen maart.csv</div>
<div class="c r" style="left:177.60px;width:64.16px;top:291.52px">18</div>
<div class="c" style="left:247.16px;top:291.52px">Lift-zaal rechts</div>
<div class="c r" style="left:310.92px;width:64.16px;top:291.52px">2</div>
<div class="c r" style="left:377.59px;width:64.16px;top:291.52px">1</div>
<div class="c" style="left:447.15px;top:291.52px">Lift</div>
<div class="c r" style="left:510.91px;width:64.16px;top:291.52px">1750</div>
<div class="c r" style="left:577.58px;width:64.16px;top:291.52px">450</div>
<div class="c r" style="left:644.24px;width:64.16px;top:291.52px">389</div>
<div class="c r" style="left:710.90px;width:126.40px;top:291.52px">25-03-2022 18:58:05</div>
<div class="c r" style="left:839.80px;width:64.20px;top:291.52px">32</div>
<div class="c" style="left:69.70px;width:107.50px;height:11px;overflow:hidden;top:305.36px">MOCK_DATA zorgbewegingen maart.csv</div>
<div class="c r" style="left:177.60px;width:64.16px;top:305.36px">10</div>
<div class="c" style="left:247.16px;top:305.36px">Lift-zaal rechts</div>
<div class="c r" style="left:310.92px;width:64.16px;top:305.36px">2</div>
<div class="c r" style="left:377.59px;width:64.16px;top:305.36px">3</div>
<div class="c" style="left:447.15px;top:305.36px">Punt IV</div>
<div class="c r" style="left:510.91px;width:64.16px;top:305.36px">2870</div>
<div class="c r" style="left:577.58px;width:64.16px;top:305.36px">330</div>
<div class="c r" style="left:644.24px;width:64.16px;top:305.36px">509</div>
<div class="c r" style="left:710.90px;width:126.40px;top:305.36px">29-03-2022 10:58:55</div>
<div class="c r" style="left:839.80px;width:64.20px;top:305.36px">36</div>
<div class="c" style="left:69.70px;width:107.50px;height:11px;overflow:hidden;top:319.21px">MOCK_DATA zorgbewegingen maart.csv</div>
<div class="c r" style="left:177.60px;width:64.16px;top:319.21px">10</div>
<div class="c" style="left:247.16px;top:319.21px">Lift-zaal rechts</div>
<div class="c r" style="left:310.92px;width:64.16px;top:319.21px">2</div>
<div class="c r" style="left:377.59px;width:64.16px;top:319.21px">2</div>
<div class="c" style="left:447.15px;top:319.21px">Punt III</div>
<div class="c r" style="left:510.91px;width:64.16px;top:319.21px">1670</div>
<div class="c r" style="left:577.58px;width:64.16px;top:319.21px">330</div>
<div class="c r" style="left:644.24px;width:64.16px;top:319.21px">509</div>
<div class="c r" style="left:710.90px;width:126.40px;top:319.21px">29-03-2022 10:58:55</div>
<div class="c r" style="left:839.80px;width:64.20px;top:319.21px">36</div>
<div class="c" style="left:69.70px;width:107.50px;height:11px;overflow:hidden;top:333.06px">MOCK_DATA zorgbewegingen maart.csv</div>
<div class="c r" style="left:177.60px;width:64.16px;top:333.06px">10</div>
<div class="c" style="left:247.16px;top:333.06px">Lift-zaal rechts</div>
<div class="c r" style="left:310.92px;width:64.16px;top:333.06px">2</div>
<div class="c r" style="left:377.59px;width:64.16px;top:333.06px">4</div>
<div class="c" style="left:447.15px;top:333.06px">Zaal rechts</div>
<div class="c r" style="left:510.91px;width:64.16px;top:333.06px">2870</div>
<div class="c r" style="left:577.58px;width:64.16px;top:333.06px">180</div>
<div class="c r" style="left:644.24px;width:64.16px;top:333.06px">659</div>
<div class="c r" style="left:710.90px;width:126.40px;top:333.06px">29-03-2022 10:58:55</div>
<div class="c r" style="left:839.80px;width:64.20px;top:333.06px">36</div>
<div class="c" style="left:69.70px;width:107.50px;height:11px;overflow:hidden;top:346.90px">MOCK_DATA zorgbewegingen maart.csv</div>
<div class="c r" style="left:177.60px;width:64.16px;top:346.90px">10</div>
<div class="c" style="left:247.16px;top:346.90px">Lift-zaal rechts</div>
<div class="c r" style="left:310.92px;width:64.16px;top:346.90px">2</div>
<div class="c r" style="left:377.59px;width:64.16px;top:346.90px">1</div>
<div class="c" style="left:447.15px;top:346.90px">Lift</div>
<div class="c r" style="left:510.91px;width:64.16px;top:346.90px">1750</div>
<div class="c r" style="left:577.58px;width:64.16px;top:346.90px">450</div>
<div class="c r" style="left:644.24px;width:64.16px;top:346.90px">389</div>
<div class="c r" style="left:710.90px;width:126.40px;top:346.90px">29-03-2022 10:58:55</div>
<div class="c r" style="left:839.80px;width:64.20px;top:346.90px">36</div>
<div class="c" style="left:69.70px;width:107.50px;height:11px;overflow:hidden;top:360.75px">MOCK_DATA zorgbewegingen maart.csv</div>
<div class="c r" style="left:177.60px;width:64.16px;top:360.75px">21</div>
<div class="c" style="left:247.16px;top:360.75px">Lift-zaal rechts</div>
<div class="c r" style="left:310.92px;width:64.16px;top:360.75px">2</div>
<div class="c r" style="left:377.59px;width:64.16px;top:360.75px">3</div>
<div class="c" style="left:447.15px;top:360.75px">Punt IV</div>
<div class="c r" style="left:510.91px;width:64.16px;top:360.75px">2870</div>
<div class="c r" style="left:577.58px;width:64.16px;top:360.75px">330</div>
<div class="c r" style="left:644.24px;width:64.16px;top:360.75px">509</div>
<div class="c r" style="left:710.90px;width:126.40px;top:360.75px">11-03-2022 21:29:45</div>
<div class="c r" style="left:839.80px;width:64.20px;top:360.75px">16</div>
<div class="c" style="left:69.70px;width:107.50px;height:11px;overflow:hidden;top:374.59px">MOCK_DATA zorgbewegingen maart.csv</div>
<div class="c r" style="left:177.60px;width:64.16px;top:374.59px">21</div>
<div class="c" style="left:247.16px;top:374.59px">Lift-zaal rechts</div>
<div class="c r" style="left:310.92px;width:64.16px;top:374.59px">2</div>
<div class="c r" style="left:377.59px;width:64.16px;top:374.59px">2</div>
<div class="c" style="left:447.15px;top:374.59px">Punt III</div>
<div class="c r" style="left:510.91px;width:64.16px;top:374.59px">1670</div>
<div class="c r" style="left:577.58px;width:64.16px;top:374.59px">330</div>
<div class="c r" style="left:644.24px;width:64.16px;top:374.59px">509</div>
<div class="c r" style="left:710.90px;width:126.40px;top:374.59px">11-03-2022 21:29:45</div>
<div class="c r" style="left:839.80px;width:64.20px;top:374.59px">16</div>
<div class="c" style="left:69.70px;width:107.50px;height:11px;overflow:hidden;top:388.44px">MOCK_DATA zorgbewegingen maart.csv</div>
<div class="c r" style="left:177.60px;width:64.16px;top:388.44px">21</div>
<div class="c" style="left:247.16px;top:388.44px">Lift-zaal rechts</div>
<div class="c r" style="left:310.92px;width:64.16px;top:388.44px">2</div>
<div class="c r" style="left:377.59px;width:64.16px;top:388.44px">4</div>
<div class="c" style="left:447.15px;top:388.44px">Zaal rechts</div>
<div class="c r" style="left:510.91px;width:64.16px;top:388.44px">2870</div>
<div class="c r" style="left:577.58px;width:64.16px;top:388.44px">180</div>
<div class="c r" style="left:644.24px;width:64.16px;top:388.44px">659</div>
<div class="c r" style="left:710.90px;width:126.40px;top:388.44px">11-03-2022 21:29:45</div>
<div class="c r" style="left:839.80px;width:64.20px;top:388.44px">16</div>
<div class="c" style="left:69.70px;width:107.50px;height:11px;overflow:hidden;top:402.29px">MOCK_DATA zorgbewegingen maart.csv</div>
<div class="c r" style="left:177.60px;width:64.16px;top:402.29px">21</div>
<div class="c" style="left:247.16px;top:402.29px">Lift-zaal rechts</div>
<div class="c r" style="left:310.92px;width:64.16px;top:402.29px">2</div>
<div class="c r" style="left:377.59px;width:64.16px;top:402.29px">1</div>
<div class="c" style="left:447.15px;top:402.29px">Lift</div>
<div class="c r" style="left:510.91px;width:64.16px;top:402.29px">1750</div>
<div class="c r" style="left:577.58px;width:64.16px;top:402.29px">450</div>
<div class="c r" style="left:644.24px;width:64.16px;top:402.29px">389</div>
<div class="c r" style="left:710.90px;width:126.40px;top:402.29px">11-03-2022 21:29:45</div>
<div class="c r" style="left:839.80px;width:64.20px;top:402.29px">16</div>
<div class="c" style="left:69.70px;width:107.50px;height:11px;overflow:hidden;top:416.13px">MOCK_DATA zorgbewegingen maart.csv</div>
<div class="c r" style="left:177.60px;width:64.16px;top:416.13px">11</div>
<div class="c" style="left:247.16px;top:416.13px">Lift-zaal rechts</div>
<div class="c r" style="left:310.92px;width:64.16px;top:416.13px">2</div>
<div class="c r" style="left:377.59px;width:64.16px;top:416.13px">3</div>
<div class="c" style="left:447.15px;top:416.13px">Punt IV</div>
<div class="c r" style="left:510.91px;width:64.16px;top:416.13px">2870</div>
<div class="c r" style="left:577.58px;width:64.16px;top:416.13px">330</div>
<div class="c r" style="left:644.24px;width:64.16px;top:416.13px">509</div>
<div class="c r" style="left:710.90px;width:126.40px;top:416.13px">25-03-2022 11:09:24</div>
<div class="c r" style="left:839.80px;width:64.20px;top:416.13px">43</div>
<div class="c" style="left:69.70px;width:107.50px;height:11px;overflow:hidden;top:429.98px">MOCK_DATA zorgbewegingen maart.csv</div>
<div class="c r" style="left:177.60px;width:64.16px;top:429.98px">11</div>
<div class="c" style="left:247.16px;top:429.98px">Lift-zaal rechts</div>
<div class="c r" style="left:310.92px;width:64.16px;top:429.98px">2</div>
<div class="c r" style="left:377.59px;width:64.16px;top:429.98px">2</div>
<div class="c" style="left:447.15px;top:429.98px">Punt III</div>
<div class="c r" style="left:510.91px;width:64.16px;top:429.98px">1670</div>
<div class="c r" style="left:577.58px;width:64.16px;top:429.98px">330</div>
<div class="c r" style="left:644.24px;width:64.16px;top:429.98px">509</div>
<div class="c r" style="left:710.90px;width:126.40px;top:429.98px">25-03-2022 11:09:24</div>
<div class="c r" style="left:839.80px;width:64.20px;top:429.98px">43</div>
<div class="c" style="left:69.70px;width:107.50px;height:11px;overflow:hidden;top:443.82px">MOCK_DATA zorgbewegingen maart.csv</div>
<div class="c r" style="left:177.60px;width:64.16px;top:443.82px">11</div>
<div class="c" style="left:247.16px;top:443.82px">Lift-zaal rechts</div>
<div class="c r" style="left:310.92px;width:64.16px;top:443.82px">2</div>
<div class="c r" style="left:377.59px;width:64.16px;top:443.82px">4</div>
<div class="c" style="left:447.15px;top:443.82px">Zaal rechts</div>
<div class="c r" style="left:510.91px;width:64.16px;top:443.82px">2870</div>
<div class="c r" style="left:577.58px;width:64.16px;top:443.82px">180</div>
<div class="c r" style="left:644.24px;width:64.16px;top:443.82px">659</div>
<div class="c r" style="left:710.90px;width:126.40px;top:443.82px">25-03-2022 11:09:24</div>
<div class="c r" style="left:839.80px;width:64.20px;top:443.82px">43</div>
<div class="c" style="left:69.70px;width:107.50px;height:11px;overflow:hidden;top:457.67px">MOCK_DATA zorgbewegingen maart.csv</div>
<div class="c r" style="left:177.60px;width:64.16px;top:457.67px">11</div>
<div class="c" style="left:247.16px;top:457.67px">Lift-zaal rechts</div>
<div class="c r" style="left:310.92px;width:64.16px;top:457.67px">2</div>
<div class="c r" style="left:377.59px;width:64.16px;top:457.67px">1</div>
<div class="c" style="left:447.15px;top:457.67px">Lift</div>
<div class="c r" style="left:510.91px;width:64.16px;top:457.67px">1750</div>
<div class="c r" style="left:577.58px;width:64.16px;top:457.67px">450</div>
<div class="c r" style="left:644.24px;width:64.16px;top:457.67px">389</div>
<div class="c r" style="left:710.90px;width:126.40px;top:457.67px">25-03-2022 11:09:24</div>
<div class="c r" style="left:839.80px;width:64.20px;top:457.67px">43</div>
<div class="c" style="left:69.70px;width:107.50px;height:11px;overflow:hidden;top:471.52px">MOCK_DATA zorgbewegingen maart.csv</div>
<div class="c r" style="left:177.60px;width:64.16px;top:471.52px">21</div>
<div class="c" style="left:247.16px;top:471.52px">Lift-zaal rechts</div>
<div class="c r" style="left:310.92px;width:64.16px;top:471.52px">2</div>
<div class="c r" style="left:377.59px;width:64.16px;top:471.52px">3</div>
<div class="c" style="left:447.15px;top:471.52px">Punt IV</div>
<div class="c r" style="left:510.91px;width:64.16px;top:471.52px">2870</div>
<div class="c r" style="left:577.58px;width:64.16px;top:471.52px">330</div>
<div class="c r" style="left:644.24px;width:64.16px;top:471.52px">509</div>
<div class="c r" style="left:710.90px;width:126.40px;top:471.52px">16-03-2022 21:10:03</div>
<div class="c r" style="left:839.80px;width:64.20px;top:471.52px">34</div>
<div class="c" style="left:69.70px;width:107.50px;height:11px;overflow:hidden;top:485.36px">MOCK_DATA zorgbewegingen maart.csv</div>
<div class="c r" style="left:177.60px;width:64.16px;top:485.36px">21</div>
<div class="c" style="left:247.16px;top:485.36px">Lift-zaal rechts</div>
<div class="c r" style="left:310.92px;width:64.16px;top:485.36px">2</div>
<div class="c r" style="left:377.59px;width:64.16px;top:485.36px">2</div>
<div class="c" style="left:447.15px;top:485.36px">Punt III</div>
<div class="c r" style="left:510.91px;width:64.16px;top:485.36px">1670</div>
<div class="c r" style="left:577.58px;width:64.16px;top:485.36px">330</div>
<div class="c r" style="left:644.24px;width:64.16px;top:485.36px">509</div>
<div class="c r" style="left:710.90px;width:126.40px;top:485.36px">16-03-2022 21:10:03</div>
<div class="c r" style="left:839.80px;width:64.20px;top:485.36px">34</div>
<div class="c" style="left:69.70px;width:107.50px;height:11px;overflow:hidden;top:499.21px">MOCK_DATA zorgbewegingen maart.csv</div>
<div class="c r" style="left:177.60px;width:64.16px;top:499.21px">21</div>
<div class="c" style="left:247.16px;top:499.21px">Lift-zaal rechts</div>
<div class="c r" style="left:310.92px;width:64.16px;top:499.21px">2</div>
<div class="c r" style="left:377.59px;width:64.16px;top:499.21px">4</div>
<div class="c" style="left:447.15px;top:499.21px">Zaal rechts</div>
<div class="c r" style="left:510.91px;width:64.16px;top:499.21px">2870</div>
<div class="c r" style="left:577.58px;width:64.16px;top:499.21px">180</div>
<div class="c r" style="left:644.24px;width:64.16px;top:499.21px">659</div>
<div class="c r" style="left:710.90px;width:126.40px;top:499.21px">16-03-2022 21:10:03</div>
<div class="c r" style="left:839.80px;width:64.20px;top:499.21px">34</div>
<div class="c" style="left:69.70px;width:107.50px;height:11px;overflow:hidden;top:513.05px">MOCK_DATA zorgbewegingen maart.csv</div>
<div class="c r" style="left:177.60px;width:64.16px;top:513.05px">21</div>
<div class="c" style="left:247.16px;top:513.05px">Lift-zaal rechts</div>
<div class="c r" style="left:310.92px;width:64.16px;top:513.05px">2</div>
<div class="c r" style="left:377.59px;width:64.16px;top:513.05px">1</div>
<div class="c" style="left:447.15px;top:513.05px">Lift</div>
<div class="c r" style="left:510.91px;width:64.16px;top:513.05px">1750</div>
<div class="c r" style="left:577.58px;width:64.16px;top:513.05px">450</div>
<div class="c r" style="left:644.24px;width:64.16px;top:513.05px">389</div>
<div class="c r" style="left:710.90px;width:126.40px;top:513.05px">16-03-2022 21:10:03</div>
<div class="c r" style="left:839.80px;width:64.20px;top:513.05px">34</div>
<div class="c" style="left:69.70px;width:107.50px;height:11px;overflow:hidden;top:526.90px">MOCK_DATA zorgbewegingen maart.csv</div>
<div class="c r" style="left:177.60px;width:64.16px;top:526.90px">8</div>
<div class="c" style="left:247.16px;top:526.90px">Lift-zaal rechts</div>
<div class="c r" style="left:310.92px;width:64.16px;top:526.90px">2</div>
<div class="c r" style="left:377.59px;width:64.16px;top:526.90px">3</div>
<div class="c" style="left:447.15px;top:526.90px">Punt IV</div>
<div class="c r" style="left:510.91px;width:64.16px;top:526.90px">2870</div>
<div class="c r" style="left:577.58px;width:64.16px;top:526.90px">330</div>
<div class="c r" style="left:644.24px;width:64.16px;top:526.90px">509</div>
<div class="c r" style="left:710.90px;width:126.40px;top:526.90px">29-03-2022 08:35:15</div>
<div class="c r" style="left:839.80px;width:64.20px;top:526.90px">38</div>
<div class="c" style="left:69.70px;width:107.50px;height:11px;overflow:hidden;top:540.75px">MOCK_DATA zorgbewegingen maart.csv</div>
<div class="c r" style="left:177.60px;width:64.16px;top:540.75px">8</div>
<div class="c" style="left:247.16px;top:540.75px">Lift-zaal rechts</div>
<div class="c r" style="left:310.92px;width:64.16px;top:540.75px">2</div>
<div class="c r" style="left:377.59px;width:64.16px;top:540.75px">2</div>
<div class="c" style="left:447.15px;top:540.75px">Punt III</div>
<div class="c r" style="left:510.91px;width:64.16px;top:540.75px">1670</div>
<div class="c r" style="left:577.58px;width:64.16px;top:540.75px">330</div>
<div class="c r" style="left:644.24px;width:64.16px;top:540.75px">509</div>
<div class="c r" style="left:710.90px;width:126.40px;top:540.75px">29-03-2022 08:35:15</div>
<div class="c r" style="left:839.80px;width:64.20px;top:540.75px">38</div>
<div class="c" style="left:69.70px;width:107.50px;height:11px;overflow:hidden;top:554.59px">MOCK_DATA zorgbewegingen maart.csv</div>
<div class="c r" style="left:177.60px;width:64.16px;top:554.59px">8</div>
<div class="c" style="left:247.16px;top:554.59px">Lift-zaal rechts</div>
<div class="c r" style="left:310.92px;width:64.16px;top:554.59px">2</div>
<div class="c r" style="left:377.59px;width:64.16px;top:554.59px">4</div>
<div class="c" style="left:447.15px;top:554.59px">Zaal rechts</div>
<div class="c r" style="left:510.91px;width:64.16px;top:554.59px">2870</div>
<div class="c r" style="left:577.58px;width:64.16px;top:554.59px">180</div>
<div class="c r" style="left:644.24px;width:64.16px;top:554.59px">659</div>
<div class="c r" style="left:710.90px;width:126.40px;top:554.59px">29-03-2022 08:35:15</div>
<div class="c r" style="left:839.80px;width:64.20px;top:554.59px">38</div>
<div class="c" style="left:69.70px;width:107.50px;height:11px;overflow:hidden;top:568.44px">MOCK_DATA zorgbewegingen maart.csv</div>
<div class="c r" style="left:177.60px;width:64.16px;top:568.44px">8</div>
<div class="c" style="left:247.16px;top:568.44px">Lift-zaal rechts</div>
<div class="c r" style="left:310.92px;width:64.16px;top:568.44px">2</div>
<div class="c r" style="left:377.59px;width:64.16px;top:568.44px">1</div>
<div class="c" style="left:447.15px;top:568.44px">Lift</div>
<div class="c r" style="left:510.91px;width:64.16px;top:568.44px">1750</div>
<div class="c r" style="left:577.58px;width:64.16px;top:568.44px">450</div>
<div class="c r" style="left:644.24px;width:64.16px;top:568.44px">389</div>
<div class="c r" style="left:710.90px;width:126.40px;top:568.44px">29-03-2022 08:35:15</div>
<div class="c r" style="left:839.80px;width:64.20px;top:568.44px">38</div>
<div class="a" style="left:66.80px;top:190.70px;width:839.70px;height:1.20px;background:#e27b76"></div>
<div class="a" style="left:66.80px;top:246.08px;width:839.70px;height:1.20px;background:#e27b76"></div>
<div class="a" style="left:905.90px;top:190.70px;width:1.20px;height:56.58px;background:#e27b76"></div>
<div class="a" style="left:66.80px;top:301.46px;width:839.70px;height:1.20px;background:#7199e6"></div>
<div class="a" style="left:66.80px;top:356.85px;width:839.70px;height:1.20px;background:#7199e6"></div>
<div class="a" style="left:905.90px;top:301.46px;width:1.20px;height:56.58px;background:#7199e6"></div>
<div class="a" style="left:66.80px;top:412.23px;width:839.70px;height:1.20px;background:#f2cf8c"></div>
<div class="a" style="left:66.80px;top:467.62px;width:839.70px;height:1.20px;background:#f2cf8c"></div>
<div class="a" style="left:905.90px;top:412.23px;width:1.20px;height:56.58px;background:#f2cf8c"></div>
<div class="a" style="left:66.20px;top:509.05px;width:112.00px;height:15.25px;border:1.3px solid #1a73e8"></div>
<div class="a" style="left:175.00px;top:521.20px;width:5.00px;height:5.00px;background:#1a73e8;border:0.8px solid #fff"></div>
</div></div>
<div class="a" style="left:942.50px;top:161.40px;width:8.00px;height:375.60px;background:#fff"></div>
<div class="a" style="left:942.50px;top:161.40px;width:0.60px;height:375.60px;background:#e8eaed"></div>
<div class="a" style="left:942.50px;top:161.40px;width:8.00px;height:16.05px;background:#f1f3f4"></div>
<div class="a" style="left:942.20px;top:161.40px;width:0.80px;height:16.05px;background:#dadce0"></div>
<div class="a" style="left:942.50px;top:176.65px;width:8.00px;height:0.80px;background:#dadce0"></div>
<div class="a" style="left:944.50px;top:178.50px;width:4.60px;height:16.70px;background:#dadce0;border-radius:2.3px"></div>
<div class="a" style="left:942.50px;top:507.80px;width:8.00px;height:29.20px;background:#f8f9fa"></div>
<div class="a" style="left:942.50px;top:507.80px;width:8.00px;height:0.60px;background:#e8eaed"></div>
<div class="a" style="left:942.50px;top:518.00px;width:8.00px;height:0.60px;background:#e8eaed"></div>
<svg class="a" style="left:944.40px;top:511.30px" width="4" height="3" viewBox="0 0 4 3"><path d="M0 2.6H4L2 0Z" fill="#9aa0a6"/></svg>
<svg class="a" style="left:944.40px;top:521.80px" width="4" height="3" viewBox="0 0 4 3"><path d="M0 0H4L2 2.6Z" fill="#9aa0a6"/></svg>
<div class="a" style="left:37.00px;top:529.40px;width:905.50px;height:7.60px;background:#fff"></div>
<div class="a" style="left:37.00px;top:529.40px;width:29.80px;height:7.60px;background:#f8f9fa"></div>
<div class="a" style="left:37.00px;top:529.40px;width:913.00px;height:0.60px;background:#e8eaed"></div>
<div class="a" style="left:68.00px;top:530.30px;width:419.00px;height:5.30px;background:#dadce0;border-radius:2.7px"></div>
<div class="a" style="left:921.60px;top:530.00px;width:29.00px;height:7.00px;background:#f8f9fa"></div>
<div class="a" style="left:921.60px;top:529.40px;width:0.60px;height:7.60px;background:#e8eaed"></div>
<div class="a" style="left:931.70px;top:529.40px;width:0.60px;height:7.60px;background:#e8eaed"></div>
<svg class="a" style="left:925.30px;top:531.70px" width="3" height="4" viewBox="0 0 3 4"><path d="M2.6 0V4L0 2Z" fill="#9aa0a6"/></svg>
<svg class="a" style="left:935.60px;top:531.70px" width="3" height="4" viewBox="0 0 3 4"><path d="M0 0V4L2.6 2Z" fill="#9aa0a6"/></svg>
<div class="a" style="left:950.10px;top:119.20px;width:0.80px;height:443.80px;background:#dadce0"></div>
<div class="a" style="left:37.00px;top:161.00px;width:913.50px;height:1.00px;background:#dadce0"></div>
<div class="a" style="left:37.00px;top:537.00px;width:913.10px;height:26.00px;background:#f1f3f4"></div>
<div class="a" style="left:37.00px;top:537.00px;width:913.10px;height:0.60px;background:#dadce0"></div>
<svg class="a" style="left:70.50px;top:545.80px" width="7" height="7" viewBox="0 0 7 7"><path d="M3.5 0V7M0 3.5H7" stroke="#5f6368" stroke-width="1.25"/></svg>
<svg class="a" style="left:89.80px;top:545.20px" width="8.8" height="8" viewBox="0 0 8.8 8"><path d="M0 0.7H8.8M0 2.9H8.8M0 5.1H8.8M0 7.3H8.8" stroke="#5f6368" stroke-width="1.1"/></svg>
<div class="a" style="left:113.20px;top:537.00px;width:0.70px;height:26.00px;background:#dadce0"></div>
<div class="a" style="left:207.20px;top:537.00px;width:0.60px;height:26.00px;background:#dadce0"></div>
<div class="a" style="left:288.70px;top:537.60px;width:142.60px;height:25.40px;background:#fff"></div>
<div class="t" style="left:124.20px;top:545.00px;font-size:10.45px;color:#5f6368;-webkit-text-stroke:0.3px #5f6368">Zorginstelling</div>
<svg class="a" style="left:192.10px;top:548.80px" width="5" height="3" viewBox="0 0 5 3"><path d="M0 0H4.8L2.4 2.6Z" fill="#80868b"/></svg>
<div class="t" style="left:219.00px;top:545.00px;font-size:10.45px;color:#5f6368;-webkit-text-stroke:0.3px #5f6368">Voorbeeld</div>
<svg class="a" style="left:272.60px;top:548.80px" width="5" height="3" viewBox="0 0 5 3"><path d="M0 0H4.8L2.4 2.6Z" fill="#80868b"/></svg>
<div class="t" style="left:299.20px;top:545.00px;font-size:10.5px;color:#2b8a3e;-webkit-text-stroke:0.3px #2b8a3e">Voorbeeld eindresultaat</div>
<svg class="a" style="left:414.80px;top:548.80px" width="5" height="3" viewBox="0 0 5 3"><path d="M0 0H4.8L2.4 2.6Z" fill="#2b8a3e"/></svg>
<div class="t" style="left:441.80px;top:545.00px;font-size:10.1px;color:#5f6368;-webkit-text-stroke:0.3px #5f6368">Kamer</div>
<svg class="a" style="left:477.30px;top:548.80px" width="5" height="3" viewBox="0 0 5 3"><path d="M0 0H4.8L2.4 2.6Z" fill="#80868b"/></svg>
<div class="a" style="left:431.30px;top:537.00px;width:0.60px;height:26.00px;background:#dadce0"></div>
<div class="a" style="left:492.40px;top:537.00px;width:0.60px;height:26.00px;background:#dadce0"></div>
<svg class="a" style="left:924.70px;top:544.00px" width="12.1" height="13.2" viewBox="0 0 12.1 13.2"><path d="M1 0H11.1Q12.1 0 12.1 1V10.3Q12.1 11.3 11.1 11.3H7.6L6.05 13.2L4.5 11.3H1Q0 11.3 0 10.3V1Q0 0 1 0Z" fill="#5f6368"/><path d="M6.05 1.6Q6.5 5.2 10.1 5.65Q6.5 6.1 6.05 9.7Q5.6 6.1 2 5.65Q5.6 5.2 6.05 1.6Z" fill="#fff"/></svg>
</div></div>
</body></html>
